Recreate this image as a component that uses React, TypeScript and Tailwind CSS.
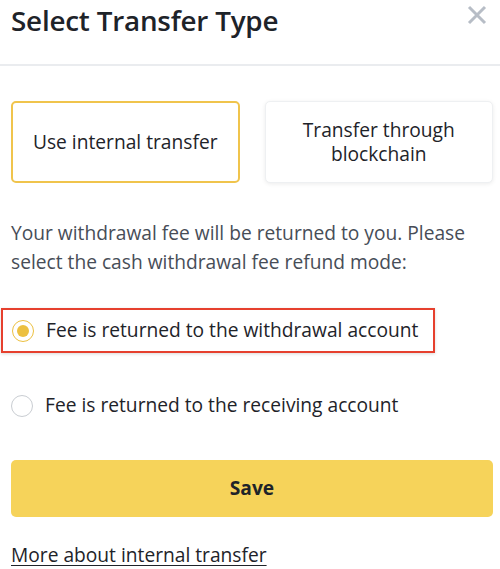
export default function App() {
  return (
    <div className="w-[500px] h-[569px] overflow-hidden bg-white font-['Open_Sans',sans-serif] text-[#1e2329]">
      <div className="flex items-start justify-between pl-[11px] pr-[13px] h-[64px]">
        <h1 className="text-[27.8px] font-semibold leading-[36px] mt-[2px] tracking-[-0.2px]">Select Transfer Type</h1>
        <svg width="20" height="20" viewBox="0 0 20 20" className="mt-[5px]" fill="none" stroke="#b7bdc6" strokeWidth="3" strokeLinecap="butt">
          <path d="M2 2 L18 18 M18 2 L2 18" />
        </svg>
      </div>
      <div className="h-[2px] bg-[#eaecef]" />

      <div className="pl-[11px] pr-[7px]">
        <div className="grid grid-cols-2 gap-[25px] mt-[35px]">
          <button className="h-[82px] rounded-[5px] border-2 border-[#f0c44c] bg-white text-[19.2px] leading-[24px] text-[#1e2329]">
            Use internal transfer
          </button>
          <button className="h-[82px] rounded-[5px] border border-[#eef0f2] bg-white shadow-[0_1px_4px_rgba(0,0,0,0.08)] text-[19.2px] leading-[24px] text-[#1e2329] px-6">
            Transfer through blockchain
          </button>
        </div>

        <p className="mt-[35px] text-[19.2px] leading-[29px] text-[#474d57]">
          Your withdrawal fee will be returned to you. Please select the cash withdrawal fee refund mode:
        </p>
      </div>

      <div className="mt-[32px] ml-[1px] w-[434px] h-[45px] border-2 border-[#e6402e] shadow-[0_1px_3px_rgba(0,0,0,0.15)] flex items-center pl-[9px] gap-[12px]">
        <span className="w-[22px] h-[22px] rounded-full border-[1.5px] border-[#ecc040] flex items-center justify-center">
          <span className="w-[12px] h-[12px] rounded-full bg-[#ecc040]" />
        </span>
        <span className="text-[19.2px] text-[#1e2329]">Fee is returned to the withdrawal account</span>
      </div>

      <div className="pl-[11px] pr-[7px]">
        <div className="mt-[30px] h-[45px] flex items-center gap-[12px]">
          <span className="w-[22px] h-[22px] rounded-full border-[1.5px] border-[#c9cdd2]" />
          <span className="text-[19.2px] text-[#1e2329]">Fee is returned to the receiving account</span>
        </div>

        <button className="mt-[32px] w-full h-[57px] rounded-[5px] bg-[#f6d35a] text-[19.2px] font-bold text-[#1e2329]">
          Save
        </button>

        <a href="#" className="block mt-[26px] text-[19.2px] leading-[24px] text-[#1e2329] underline underline-offset-[3px]">
          More about internal transfer
        </a>
      </div>
    </div>
  );
}
